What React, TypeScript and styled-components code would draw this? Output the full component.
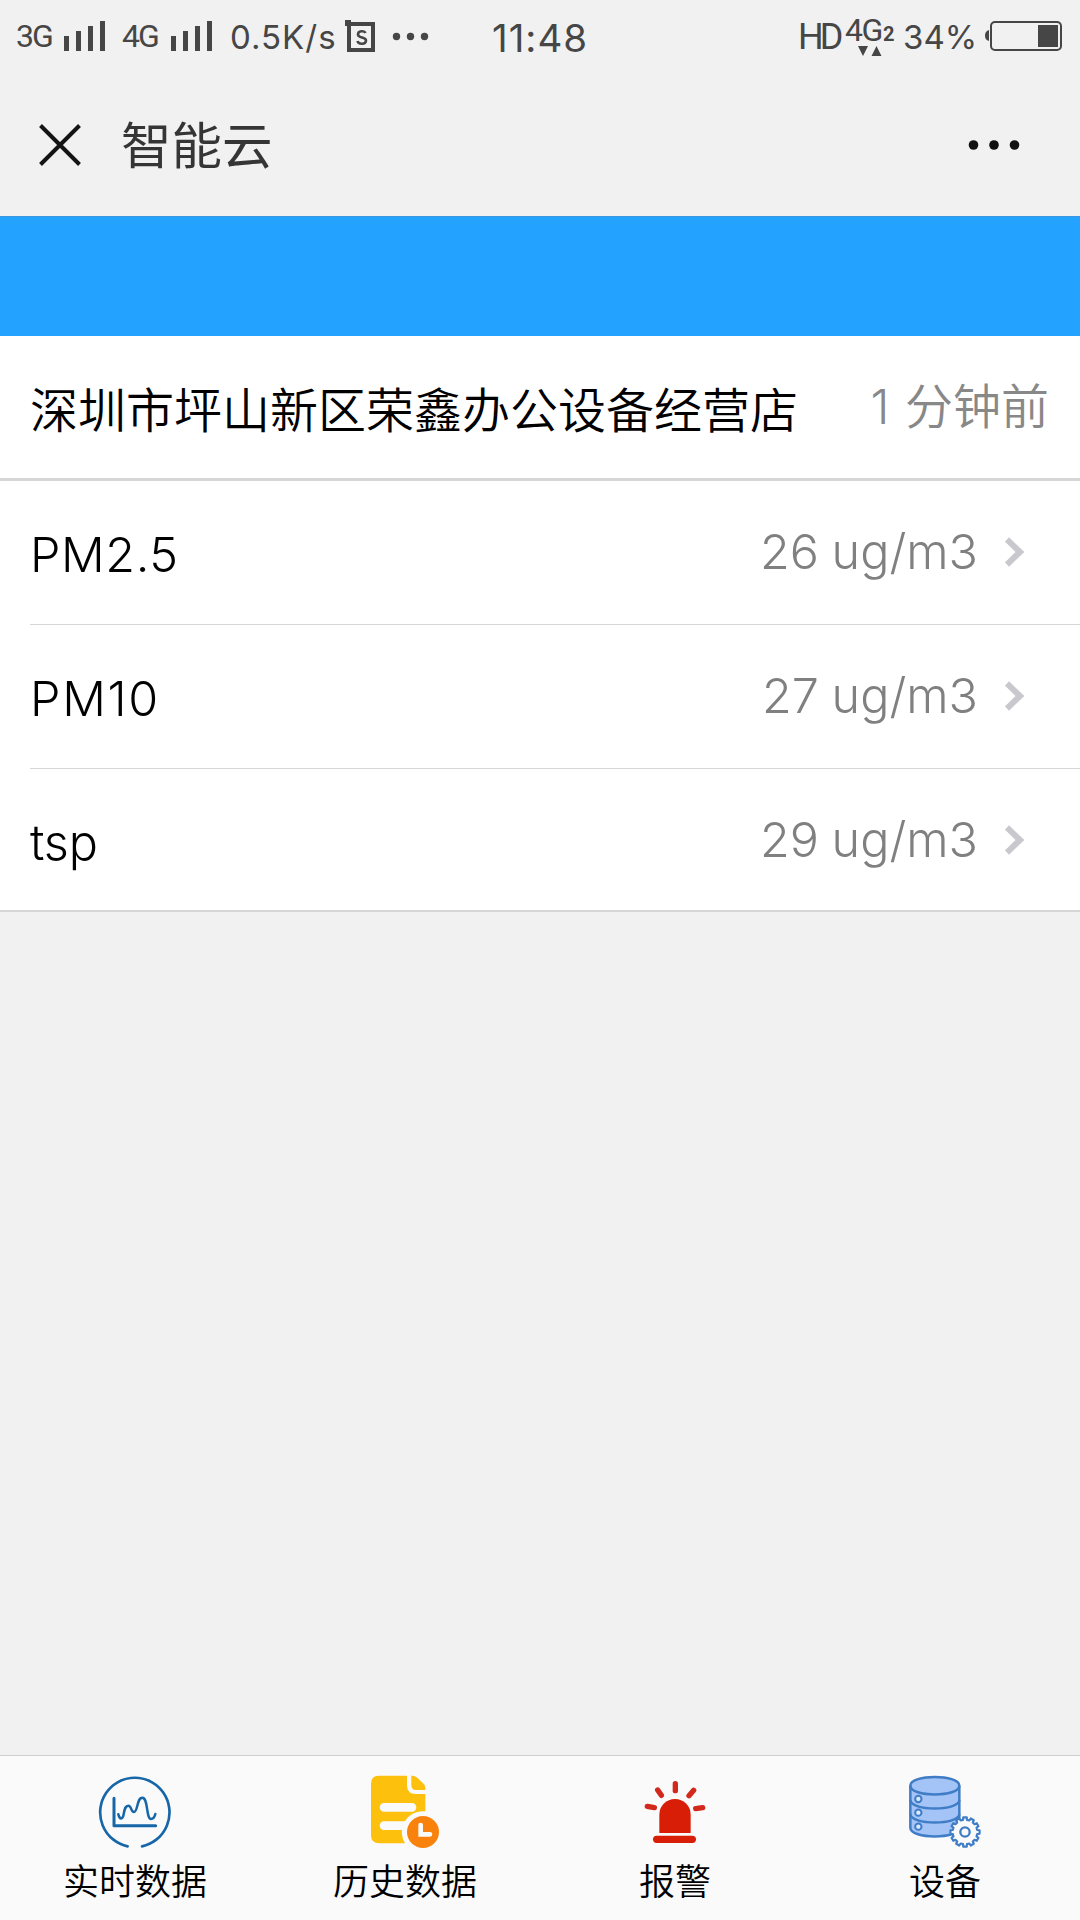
import React from "react";
import styled, { createGlobalStyle } from "styled-components";

const latin = `Inter, "Noto Sans CJK SC", sans-serif`;
const cjk = `"Noto Sans CJK SC", sans-serif`;
const ink = "#464646";

const GlobalStyle = createGlobalStyle`
  * { box-sizing: border-box; }
  body { margin: 0; background: #f1f1f1; }
  svg { display: block; flex: none; }
`;

const Screen = styled.div`
  display: flex;
  flex-direction: column;
  width: 1080px;
  height: 1920px;
  background: #f1f1f1;
  font-family: ${latin};
  overflow: hidden;
`;

const StatusBar = styled.div`
  display: flex;
  flex: none;
  align-items: flex-start;
  height: 72px;
  color: ${ink};
`;

const StatusText = styled.span<{
  $width: number;
  $size: number;
  $top: number;
  $left?: number;
  $spacing?: number;
  $weight?: number;
  $font?: string;
}>`
  flex: none;
  width: ${(p) => p.$width}px;
  margin-left: ${(p) => p.$left ?? 0}px;
  padding-top: ${(p) => p.$top}px;
  font-family: ${(p) => p.$font ?? "Inter"}, sans-serif;
  font-size: ${(p) => p.$size}px;
  font-weight: ${(p) => p.$weight ?? 400};
  letter-spacing: ${(p) => p.$spacing ?? 0}px;
  line-height: 40px;
  white-space: nowrap;
`;

const Network = styled.div`
  display: flex;
  flex: none;
  flex-wrap: wrap;
  align-content: flex-start;
  width: 56px;
`;

const NetworkText = styled.span<{ $size: number; $width: number; $weight: number; $top: number }>`
  width: ${(p) => p.$width}px;
  height: 46px;
  padding-top: ${(p) => p.$top}px;
  font: ${(p) => p.$weight} ${(p) => p.$size}px/36px Roboto, sans-serif;
  letter-spacing: -1.5px;
`;

const Bars = styled.div<{ $left: number }>`
  display: flex;
  flex: none;
  align-items: flex-end;
  gap: 7px;
  width: 41px;
  height: 51px;
  margin-left: ${(p) => p.$left}px;
`;

const Bar = styled.i<{ $height: number }>`
  width: 5px;
  height: ${(p) => p.$height}px;
  background: ${ink};
`;

const TitleBar = styled.header`
  display: flex;
  flex: none;
  align-items: center;
  height: 144px;
  padding: 2px 60px 0 39px;
`;

const Title = styled.h1`
  flex: 1;
  margin: 0 0 6px 40px;
  font: 400 50.5px/72px ${cjk};
  color: #353535;
`;

const Banner = styled.div`
  flex: none;
  height: 120px;
  background: #23a2ff;
  border-top: 1px solid #3c97dc;
`;

const StationRow = styled.div`
  display: flex;
  flex: none;
  justify-content: space-between;
  align-items: center;
  height: 145px;
  padding: 0 31px 0 30px;
  background: #fff;
  border-bottom: 3px solid #d6d6d6;
`;

const StationName = styled.span`
  font: 350 48px/72px ${cjk};
  color: #000;
`;

const Ago = styled.span`
  padding-bottom: 0;
  font: 350 48px/72px ${latin};
  word-spacing: 2px;
  color: #888;
`;

const List = styled.div`
  flex: none;
  height: 431px;
  background: #fff;
  border-bottom: 2px solid #d6d6d6;
`;

const Row = styled.div`
  display: flex;
  align-items: center;
  height: 144px;
  margin-left: 30px;
  padding-right: 55px;
  border-bottom: 1px solid #d6d6d6;
  &:last-child { height: 143px; border-bottom: 0; }
`;

const Label = styled.span<{ $spacing: number }>`
  flex: 1;
  padding-top: 4px;
  font: 300 48.5px/72px ${latin};
  letter-spacing: ${(p) => p.$spacing}px;
  color: #000;
`;

const Value = styled.span`
  padding-bottom: 2px;
  margin-right: 27px;
  font: 300 48.5px/72px ${latin};
  word-spacing: -1px;
  color: #808080;
`;

const Chevron = styled.svg`
  margin-bottom: 2px;
`;

const Content = styled.main`
  flex: 1;
`;

const TabBar = styled.nav`
  display: flex;
  flex: none;
  height: 165px;
  background: #fafafa;
  border-top: 1px solid #cfcfcf;
`;

const Tab = styled.div`
  display: flex;
  flex: 1;
  flex-direction: column;
  align-items: center;
  padding-top: 19px;
`;

const TabLabel = styled.span`
  margin-top: 4px;
  font: 350 36px/52px ${cjk};
  color: #000;
`;

const Signal = ({ left }: { left: number }) => (
  <Bars $left={left}>
    {[15, 20, 25, 30].map((h) => (
      <Bar key={h} $height={h} />
    ))}
  </Bars>
);

const TabIcon = ({ x, children }: { x: number; children: React.ReactNode }) => (
  <svg width="74" height="74" viewBox={`${x} 105 222 222`} fill="none">
    {children}
  </svg>
);

const RealtimeIcon = () => (
  <TabIcon x={174}>
    <g stroke="#1766a8" strokeWidth="8" strokeLinecap="round" strokeLinejoin="round">
      <path d="M263 319A104 104 0 1 1 306 319" />
      <path d="M222 175V257H347" strokeWidth="9" />
      <path
        d="M235 223C239 239 248 240 251 223C254 204 257 197 265 197C275 197 272 216 282 216C294 216 290 173 307 173C325 173 318 237 333 237C341 237 344 230 346 222"
        strokeWidth="7.5"
      />
    </g>
  </TabIcon>
);

const HistoryIcon = () => (
  <TabIcon x={174}>
    <path
      d="M207 107H291V136Q291 162 317 162H346V310H208Q183 310 183 285V131Q183 107 207 107Z"
      fill="#fdc00c"
    />
    <path d="M304 107H309Q316 108 322 113L342 133Q346 138 346 145V150H318Q304 150 304 136Z" fill="#fdc00c" />
    <path d="M222 202H306M222 257H306" stroke="#fafafa" strokeWidth="26" strokeLinecap="round" />
    <path d="M339 214A62 62 0 0 0 286 311L300 327H396V214Z" fill="#fafafa" />
    <circle cx="339" cy="276" r="48" fill="#f9820c" />
    <path d="M332 255V283H360" stroke="#fafafa" strokeWidth="14" strokeLinecap="round" />
  </TabIcon>
);

const AlarmIcon = () => (
  <TabIcon x={114}>
    <path d="M178 279V224A47 47 0 0 1 272 224V279Z" fill="#d81e06" />
    <rect x="159" y="287" width="129" height="22" rx="11" fill="#d81e06" />
    <path
      d="M226 131V152M173 150L184 166M281 151L267 167M142 199L163 203M287 206L308 203"
      stroke="#d3281c"
      strokeWidth="16"
      strokeLinecap="round"
    />
  </TabIcon>
);

const gearPath = (() => {
  const points: string[] = [];
  const teeth = 12;
  for (let i = 0; i < teeth; i++) {
    const base = (i * 2 * Math.PI) / teeth - Math.PI / 2;
    [
      [-0.16, 37],
      [-0.12, 44],
      [0.12, 44],
      [0.16, 37],
    ].forEach(([offset, r]) => {
      points.push(
        `${(285 + r * Math.cos(base + offset)).toFixed(1)} ${(276 + r * Math.sin(base + offset)).toFixed(1)}`
      );
    });
  }
  return `M${points.join("L")}Z`;
})();

const DeviceIcon = () => (
  <TabIcon x={114}>
    <g stroke="#3f7dc6" strokeWidth="7.5">
      <path
        d="M121 137C121 102 268 102 268 137V263C268 298 121 298 121 263Z"
        fill="#a4c4f8"
      />
      <path d="M121 137C121 172 268 172 268 137M121 180C121 214 268 214 268 180M121 222C121 256 268 256 268 222" />
      <circle cx="145" cy="177" r="9.5" fill="#dce9fd" strokeWidth="6" />
      <circle cx="145" cy="218" r="9.5" fill="#dce9fd" strokeWidth="6" />
      <circle cx="145" cy="260" r="9.5" fill="#dce9fd" strokeWidth="6" />
      <path d={gearPath} fill="#fafafa" strokeWidth="6.5" strokeLinejoin="round" />
      <circle cx="285" cy="276" r="14" strokeWidth="7" />
    </g>
  </TabIcon>
);

const readings = [
  { name: "PM2.5", value: "26 ug/m3", spacing: 0.6 },
  { name: "PM10", value: "27 ug/m3", spacing: 1.7 },
  { name: "tsp", value: "29 ug/m3", spacing: -0.2 },
];

const tabs = [
  { label: "实时数据", Icon: RealtimeIcon },
  { label: "历史数据", Icon: HistoryIcon },
  { label: "报警", Icon: AlarmIcon },
  { label: "设备", Icon: DeviceIcon },
];

export default function App() {
  return (
    <Screen>
      <GlobalStyle />
      <StatusBar>
        <StatusText $left={16} $width={38} $size={32} $top={16} $spacing={-2} $font="Roboto">3G</StatusText>
        <Signal left={10} />
        <StatusText $left={17} $width={38} $size={32} $top={16} $spacing={-2} $font="Roboto">4G</StatusText>
        <Signal left={11} />
        <StatusText $left={18} $width={114} $size={33} $top={17} $spacing={1}>0.5K/s</StatusText>
        <svg width="32" height="72" viewBox="344 0 32 72">
          <path d="M349 24H373V50H349Z" fill="none" stroke={ink} strokeWidth="4" />
          <rect x="345" y="20" width="6" height="6" fill={ink} />
          <path
            d="M365.5 33C364.5 30.500 358 30.500 358 34.500C358 38.500 366 36.500 366 40.500C366 44.500 358.500 45 357.500 41"
            fill="none"
            stroke={ink}
            strokeWidth="2.600"
          />
        </svg>
        <svg width="60" height="72" viewBox="376 0 60 72" fill={ink}>
          <circle cx="396.5" cy="36.500" r="3.700" />
          <circle cx="410.5" cy="36.500" r="3.700" />
          <circle cx="424.5" cy="36.500" r="3.700" />
        </svg>
        <StatusText $left={56} $width={306} $size={38.5} $top={18} $spacing={1} $weight={400}>11:48</StatusText>
        <StatusText $left={0} $width={47} $size={36} $top={17} $spacing={-4} $font="Roboto">HD</StatusText>
        <Network>
          <NetworkText $size={32} $width={38} $weight={400} $top={12}>4G</NetworkText>
          <NetworkText $size={20} $width={18} $weight={700} $top={16}>2</NetworkText>
          <svg width="40" height="10" viewBox="0 0 40 10" fill={ink}>
            <path d="M13 0H23L18 10ZM26.500 10H36.500L31.500 0Z" />
          </svg>
        </Network>
        <StatusText $left={2} $width={81} $size={33} $top={17}>34%</StatusText>
        <svg width="80" height="72" viewBox="984 0 80 72">
          <path d="M989 30Q985 31 985 35.500T989 41Z" fill={ink} />
          <rect x="991" y="22" width="70" height="28" rx="4" fill="none" stroke={ink} strokeWidth="2" />
          <rect x="1038" y="25" width="20" height="22" fill={ink} />
        </svg>
      </StatusBar>
      <TitleBar>
        <svg width="42" height="42" viewBox="0 0 42 42">
          <path d="M1.500 1.500L40.500 40.500M40.500 1.500L1.500 40.500" stroke="#141414" strokeWidth="4" />
        </svg>
        <Title>智能云</Title>
        <svg width="52" height="12" viewBox="0 0 52 12" fill="#111">
          <circle cx="5.500" cy="6" r="4.800" />
          <circle cx="26" cy="6" r="4.800" />
          <circle cx="46.500" cy="6" r="4.800" />
        </svg>
      </TitleBar>
      <Banner />
      <StationRow>
        <StationName>深圳市坪山新区荣鑫办公设备经营店</StationName>
        <Ago>1 分钟前</Ago>
      </StationRow>
      <List>
        {readings.map((r) => (
          <Row key={r.name}>
            <Label $spacing={r.spacing}>{r.name}</Label>
            <Value>{r.value}</Value>
            <Chevron width="20" height="30" viewBox="0 0 20 30">
              <path d="M2 2.500L15 15L2 27.500" fill="none" stroke="#c8c8cd" strokeWidth="6" />
            </Chevron>
          </Row>
        ))}
      </List>
      <Content />
      <TabBar>
        {tabs.map(({ label, Icon }) => (
          <Tab key={label}>
            <Icon />
            <TabLabel>{label}</TabLabel>
          </Tab>
        ))}
      </TabBar>
    </Screen>
  );
}
